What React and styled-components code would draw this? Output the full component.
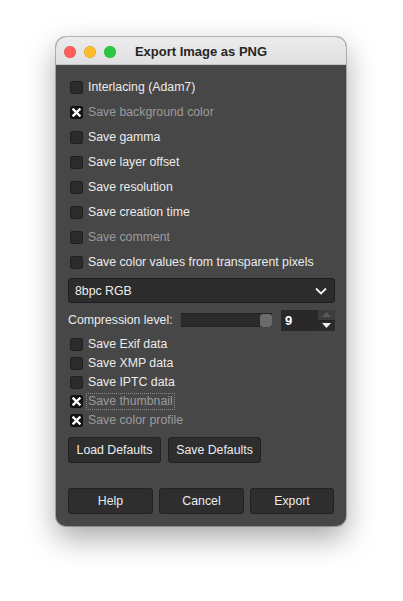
import React from "react";
import styled, { createGlobalStyle } from "styled-components";

const Global = createGlobalStyle`
  body {
    margin: 0;
    background: #ffffff;
    font-family: "Liberation Sans", Arial, sans-serif;
  }
`;

const Page = styled.div`
  padding: 37px 0 0 56px;
  width: 403px;
  height: 601px;
  box-sizing: border-box;
`;

const Window = styled.div`
  width: 290px;
  border-radius: 10px;
  overflow: hidden;
  background: #474747;
  box-shadow: 0 0 0 1px rgba(0, 0, 0, 0.25), 0 12px 30px rgba(0, 0, 0, 0.35);
  display: flex;
  flex-direction: column;
`;

const TitleBar = styled.div`
  height: 28px;
  background: linear-gradient(#ececec, #e0e0e0);
  border-bottom: 1px solid #c4c4c4;
  box-sizing: border-box;
  position: relative;
  display: flex;
  align-items: center;
  justify-content: center;
`;

const Lights = styled.div`
  position: absolute;
  left: 8px;
  top: 9px;
  display: flex;
  gap: 8px;
`;

const Light = styled.span`
  width: 12px;
  height: 12px;
  border-radius: 50%;
  background: ${(p) => p.$color};
  box-shadow: inset 0 0 0 0.5px rgba(0, 0, 0, 0.15);
`;

const Title = styled.div`
  font-size: 13px;
  font-weight: bold;
  color: #262626;
  padding-top: 1px;
`;

const Body = styled.div`
  padding: 10px 11px 12px 12px;
  display: flex;
  flex-direction: column;
  font-size: 12.3px;
`;

const Row = styled.div`
  height: ${(p) => (p.$small ? 19 : 25)}px;
  display: flex;
  align-items: center;
  padding-left: 2px;
  gap: 5px;
  color: ${(p) => (p.$dim ? "#9b9b9b" : "#ebebeb")};
`;

const Box = styled.span`
  width: 13px;
  height: 13px;
  border-radius: 3px;
  background: ${(p) => (p.$checked ? "#141414" : "#2b2b2b")};
  box-shadow: inset 0 0 0 1px rgba(0, 0, 0, 0.25);
  display: flex;
  align-items: center;
  justify-content: center;
  flex: none;
`;

const Label = styled.span`
  line-height: 15px;
  padding: 0 1px;
  border: 1px dotted ${(p) => (p.$focus ? "#8a8a8a" : "transparent")};
  margin-left: -2px;
`;

const Combo = styled.div`
  margin-top: 3px;
  height: 25px;
  border-radius: 4px;
  background: #2c2c2c;
  box-shadow: inset 0 0 0 1px #1e1e1e;
  display: flex;
  align-items: center;
  justify-content: space-between;
  padding: 0 8px 0 7px;
  color: #ececec;
`;

const CompRow = styled.div`
  margin-top: 7px;
  height: 20px;
  display: flex;
  align-items: center;
  color: #ebebeb;
  white-space: nowrap;
`;

const CompLabel = styled.span`
  flex: none;
  width: 113px;
`;

const Trough = styled.div`
  width: 91px;
  flex: none;
  height: 14px;
  background: #2a2a2a;
  box-shadow: inset 0 0 0 1px #232323;
  display: flex;
  justify-content: flex-end;
  align-items: center;
`;

const Handle = styled.div`
  width: 12px;
  height: 13px;
  border-radius: 3px;
  background: #6b6b6b;
`;

const Spin = styled.div`
  margin-left: 9px;
  display: flex;
  height: 21px;
  flex: none;
`;

const SpinEntry = styled.div`
  width: 37px;
  background: #282828;
  color: #ffffff;
  font-size: 13px;
  font-weight: bold;
  display: flex;
  align-items: center;
  padding-left: 4px;
  box-sizing: border-box;
`;

const SpinArrows = styled.div`
  width: 17px;
  display: flex;
  flex-direction: column;
  background: #2c2c2c;
  box-shadow: inset 0 0 0 1px #232323;
`;

const Arrow = styled.div`
  flex: 1;
  display: flex;
  align-items: center;
  justify-content: center;
  background: ${(p) => (p.$off ? "#3c3c3c" : "#2a2a2a")};
  & + & {
    border-top: 1px solid #222;
  }
`;

const Group = styled.div`
  margin-top: 5px;
  display: flex;
  flex-direction: column;
`;

const ButtonRow = styled.div`
  display: flex;
  gap: ${(p) => p.$gap}px;
  margin-top: ${(p) => p.$top}px;
`;

const Button = styled.div`
  width: ${(p) => p.$w}px;
  height: 26px;
  border-radius: 4px;
  background: #2e2e2e;
  box-shadow: inset 0 0 0 1px #222222;
  display: flex;
  align-items: center;
  justify-content: center;
  color: #ececec;
`;

function Cross() {
  return (
    <svg width="9" height="9" viewBox="0 0 9 9">
      <path d="M1.5 1.5 L7.5 7.5 M7.5 1.5 L1.5 7.5" stroke="#fff" strokeWidth="2.4" strokeLinecap="square" />
    </svg>
  );
}

function Check({ label, checked, dim, small, focus }) {
  return (
    <Row $dim={dim} $small={small}>
      <Box $checked={checked}>{checked && <Cross />}</Box>
      <Label $focus={focus}>{label}</Label>
    </Row>
  );
}

const top = [
  { label: "Interlacing (Adam7)" },
  { label: "Save background color", checked: true, dim: true },
  { label: "Save gamma" },
  { label: "Save layer offset" },
  { label: "Save resolution" },
  { label: "Save creation time" },
  { label: "Save comment", dim: true },
  { label: "Save color values from transparent pixels" },
];

const meta = [
  { label: "Save Exif data" },
  { label: "Save XMP data" },
  { label: "Save IPTC data" },
  { label: "Save thumbnail", checked: true, dim: true, focus: true },
  { label: "Save color profile", checked: true, dim: true },
];

export default function App() {
  return (
    <Page>
      <Global />
      <Window>
        <TitleBar>
          <Lights>
            <Light $color="#fe5f57" />
            <Light $color="#febc2e" />
            <Light $color="#28c840" />
          </Lights>
          <Title>Export Image as PNG</Title>
        </TitleBar>
        <Body>
          {top.map((c) => (
            <Check key={c.label} {...c} />
          ))}
          <Combo>
            <span>8bpc RGB</span>
            <svg width="12" height="8" viewBox="0 0 12 8">
              <path d="M1 1.5 L6 6.5 L11 1.5" fill="none" stroke="#f0f0f0" strokeWidth="1.8" />
            </svg>
          </Combo>
          <CompRow>
            <CompLabel>Compression level:</CompLabel>
            <Trough>
              <Handle />
            </Trough>
            <Spin>
              <SpinEntry>9</SpinEntry>
              <SpinArrows>
                <Arrow $off>
                  <svg width="9" height="5" viewBox="0 0 9 5">
                    <path d="M0 5 L4.5 0 L9 5 Z" fill="#5c5c5c" />
                  </svg>
                </Arrow>
                <Arrow>
                  <svg width="9" height="5" viewBox="0 0 9 5">
                    <path d="M0 0 L4.5 5 L9 0 Z" fill="#f0f0f0" />
                  </svg>
                </Arrow>
              </SpinArrows>
            </Spin>
          </CompRow>
          <Group>
            {meta.map((c) => (
              <Check key={c.label} small {...c} />
            ))}
          </Group>
          <ButtonRow $gap={7} $top={7}>
            <Button $w={93}>Load Defaults</Button>
            <Button $w={93}>Save Defaults</Button>
          </ButtonRow>
          <ButtonRow $gap={6} $top={25}>
            <Button $w={85}>Help</Button>
            <Button $w={85}>Cancel</Button>
            <Button $w={84}>Export</Button>
          </ButtonRow>
        </Body>
      </Window>
    </Page>
  );
}
